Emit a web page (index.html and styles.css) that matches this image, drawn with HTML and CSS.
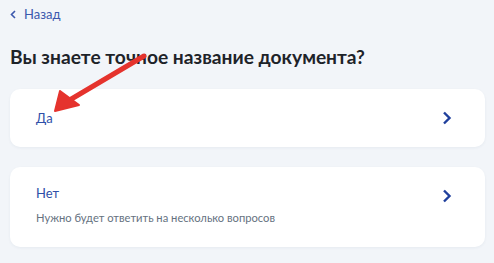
FILE: index.html
```html
<!DOCTYPE html>
<html lang="ru">
<head>
    <meta charset="UTF-8">
    <meta name="viewport" content="width=device-width, initial-scale=1.0">
    <title>Выбор документа</title>
    <link rel="stylesheet" href="styles.css">
</head>
<body>
    <a class="back" href="#">
        <svg class="back-icon" width="6" height="9" viewBox="0 0 6 9"><path d="M5 1L1.5 4.5L5 8" fill="none" stroke="#3b58ad" stroke-width="1.6"/></svg>
        Назад
    </a>
    <h1 class="title">Вы знаете точное название документа?</h1>
    <div class="card">
        <div class="card-text">
            <div class="card-title">Да</div>
        </div>
        <svg class="chevron" width="10" height="14" viewBox="0 0 10 14"><path d="M2 1.5L7.5 7L2 12.5" fill="none" stroke="#1f3f9c" stroke-width="2.4"/></svg>
    </div>
    <div class="card card-tall">
        <div class="card-text">
            <div class="card-title">Нет</div>
            <div class="card-sub">Нужно будет ответить на несколько вопросов</div>
        </div>
        <svg class="chevron" width="10" height="14" viewBox="0 0 10 14"><path d="M2 1.5L7.5 7L2 12.5" fill="none" stroke="#1f3f9c" stroke-width="2.4"/></svg>
    </div>
    <svg class="pointer" width="494" height="263" viewBox="0 0 494 263">
        <line x1="144" y1="56" x2="68" y2="101" stroke="#e5332d" stroke-width="5" stroke-linecap="round"/>
        <polygon points="55,111 60,91 79,105" fill="#e5332d" stroke="#e5332d" stroke-width="2" stroke-linejoin="round"/>
    </svg>
</body>
</html>
```

FILE: styles.css
```css
body {
    margin: 0;
    padding: 5px 9px 0 10px;
    background-color: #f2f5f9;
    font-family: Lato, "Noto Sans", sans-serif;
    color: #1e2329;
    position: relative;
    height: 263px;
    box-sizing: border-box;
    overflow: hidden;
}
.back {
    display: flex;
    align-items: center;
    gap: 8px;
    height: 18px;
    font-size: 13px;
    color: #3b58ad;
    text-decoration: none;
}
.back-icon {
    margin-top: 1px;
}
.title {
    font-size: 19.2px;
    font-weight: 700;
    line-height: 24px;
    margin: 22px 0 20px;
}
.card {
    display: flex;
    justify-content: space-between;
    align-items: center;
    background: white;
    border-radius: 10px;
    box-shadow: 0 1px 3px rgba(40, 60, 100, 0.06);
    padding: 20px 33px 20px 26px;
    margin-bottom: 20px;
}
.card-tall {
    align-items: flex-start;
    padding: 17px 33px 22px 26px;
}
.card-tall .chevron {
    margin-top: 5px;
}
.card-title {
    font-size: 13px;
    line-height: 18px;
    color: #2f4fa8;
}
.card-sub {
    margin-top: 8px;
    font-size: 11.2px;
    line-height: 15px;
    color: #66727f;
}
.pointer {
    position: absolute;
    top: 0;
    left: 0;
    pointer-events: none;
}
```
